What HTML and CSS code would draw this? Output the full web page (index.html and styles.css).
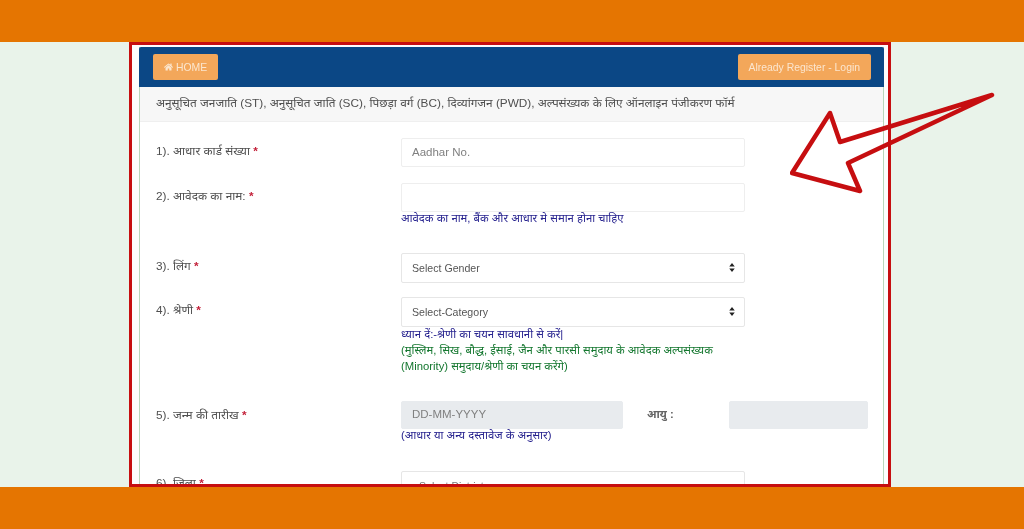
FILE: index.html
```html
<!DOCTYPE html>
<html lang="hi">
<head>
<meta charset="utf-8">
<title>पंजीकरण फॉर्म</title>
<link rel="stylesheet" href="styles.css">
</head>
<body>
<div class="band"></div>
<main class="stage">
  <div class="frame">
    <section class="panel">
      <header class="topbar">
        <a class="btn"><svg class="home" viewBox="0 0 576 512"><path d="M280 148 96 300v164a16 16 0 0 0 16 16l112-.3a16 16 0 0 0 16-16V368a16 16 0 0 1 16-16h64a16 16 0 0 1 16 16v96a16 16 0 0 0 16 16l112 .3a16 16 0 0 0 16-16V300L296 148a12 12 0 0 0-16 0zM572 251l-84-69V44a12 12 0 0 0-12-12h-56a12 12 0 0 0-12 12v72l-89-74a48 48 0 0 0-61 0L4 251a12 12 0 0 0-2 17l26 31a12 12 0 0 0 17 2L280 107a12 12 0 0 1 16 0l235 194a12 12 0 0 0 17-2l26-31a12 12 0 0 0-2-17z"/></svg>HOME</a>
        <a class="btn">Already Register - Login</a>
      </header>
      <div class="subhead">अनुसूचित जनजाति (ST), अनुसूचित जाति (SC), पिछड़ा वर्ग (BC), दिव्यांगजन (PWD), अल्पसंख्यक के लिए ऑनलाइन पंजीकरण फॉर्म</div>
      <form class="form">
        <div class="row r1">
          <label>1). आधार कार्ड संख्या <b>*</b></label>
          <div class="field"><input class="ctl" placeholder="Aadhar No."></div>
        </div>
        <div class="row r2">
          <label>2). आवेदक का नाम: <b>*</b></label>
          <div class="field"><input class="ctl"><p class="note blue">आवेदक का नाम, बैंक और आधार मे समान होना चाहिए</p></div>
        </div>
        <div class="row r3">
          <label>3). लिंग <b>*</b></label>
          <div class="field"><div class="sel"><select class="ctl tall"><option>Select Gender</option></select><svg viewBox="0 0 8 12"><path d="M4 1 7 5H1zM4 11 1 7h6z"/></svg></div></div>
        </div>
        <div class="row r4">
          <label>4). श्रेणी <b>*</b></label>
          <div class="field"><div class="sel"><select class="ctl tall"><option>Select-Category</option></select><svg viewBox="0 0 8 12"><path d="M4 1 7 5H1zM4 11 1 7h6z"/></svg></div>
            <p class="note blue">ध्यान दें:-श्रेणी का चयन सावधानी से करें|</p>
            <p class="note green">(मुस्लिम, सिख, बौद्ध, ईसाई, जैन और पारसी समुदाय के आवेदक अल्पसंख्यक<br>(Minority) समुदाय/श्रेणी का चयन करेंगे)</p>
          </div>
        </div>
        <div class="row r5">
          <label>5). जन्म की तारीख <b>*</b></label>
          <div class="field"><input class="ctl off" placeholder="DD-MM-YYYY" disabled><p class="note blue">(आधार या अन्य दस्तावेज के अनुसार)</p></div>
          <span class="agelabel">आयु :</span>
          <input class="ctl off age" disabled>
        </div>
        <div class="row r6">
          <label>6). जिला <b>*</b></label>
          <div class="field"><div class="sel"><select class="ctl tall pad"><option>Select District</option></select></div></div>
        </div>
      </form>
    </section>
  </div>
  <svg class="arrow" viewBox="0 0 210 110"><path d="M2 83 40 23 50 52 202 5 58 73 70 101Z"/></svg>
</main>
<div class="band"></div>
</body>
</html>
```
FILE: styles.css
```css
* { box-sizing: border-box; }
html, body { height: 100%; }
body {
  margin: 0;
  display: flex;
  flex-direction: column;
  background: #e9f3ea;
  font-family: "Liberation Sans", "Noto Sans Devanagari", "Noto Sans", sans-serif;
  color: #4f4f4f;
  overflow: hidden;
}
.band { height: 42px; flex: none; background: #e57501; }
.stage {
  position: relative;
  height: 445px;
  flex: none;
  overflow: hidden;
}
.frame {
  width: 762px;
  height: 445px;
  margin-left: 129px;
  padding: 2px 4px 0 7px;
  border: 3px solid #c60e10;
  background: #fdfdfd;
  overflow: hidden;
}
.panel {
  height: 600px;
  border: solid #b9d6bb;
  border-width: 0 1px;
  background: #fff;
  filter: blur(.4px);
}
.topbar {
  height: 40px;
  margin: 0 -1px;
  padding: 7px 13px 0 14px;
  display: flex;
  justify-content: space-between;
  align-items: flex-start;
  background: #0b4785;
  border-radius: 2px 2px 0 0;
}
.btn {
  height: 26px;
  padding: 0 11px;
  display: flex;
  align-items: center;
  gap: 3px;
  font-size: 10.4px;
  color: #fbe6cf;
  background: #f3a75a;
  border-radius: 2px;
}
.home { width: 9px; height: 8px; fill: #fbe6cf; }
.subhead {
  height: 35px;
  padding: 0 16px;
  display: flex;
  align-items: center;
  font-size: 11.8px;
  background: #f7f7f7;
  border-bottom: 1px solid #efefef;
  white-space: nowrap;
}
.form { padding: 16px 0 0 16px; }
.row {
  display: grid;
  grid-template-columns: 245px 344px;
  align-items: start;
}
.row label { font-size: 11.8px; padding-top: 6px; }
.row label b { color: #c3213a; }
.r2 { margin-top: 16px; }
.r3 { margin-top: 27px; }
.r4 { margin-top: 14px; }
.r5 { margin-top: 27px; grid-template-columns: 245px 222px 106px 139px; }
.r5 label { padding-top: 7px; }
.r6 { margin-top: 28px; }
.r6 label { padding-top: 5px; }
.ctl {
  display: block;
  width: 100%;
  height: 29px;
  padding: 0 10px 2px;
  font: 11.5px "Liberation Sans", sans-serif;
  color: #555;
  background: #fff;
  border: 1px solid #eeeeee;
  border-radius: 2px;
  outline: 0;
  appearance: none;
}
.ctl::placeholder { color: #808080; opacity: 1; }
.tall { height: 30px; padding-bottom: 0; font-size: 10.6px; border-color: #e6e6e6; }
.pad { padding-left: 17px; color: #777; }
.off { height: 28px; background: #e8ebee; border-color: #e8ebee; }
.sel { position: relative; }
.sel svg { position: absolute; right: 9px; top: 9px; width: 8px; height: 11px; fill: #222; }
.note { margin: 0; font-size: 11.3px; line-height: 16px; }
.blue { color: #27238f; }
.green { color: #14772f; }
.r2 .note { margin-top: -2px; }
.r4 .note.blue { margin-top: -1px; }
.r5 .note { margin-top: -2px; }
.agelabel { font-size: 11.2px; font-weight: 700; color: #666; padding: 7px 0 0 24px; }
.age { width: 139px; }
.arrow {
  position: absolute;
  left: 790px;
  top: 48px;
  width: 210px;
  height: 110px;
  fill: none;
  stroke: #c60e10;
  stroke-width: 4.5;
  stroke-linejoin: round;
}
```
